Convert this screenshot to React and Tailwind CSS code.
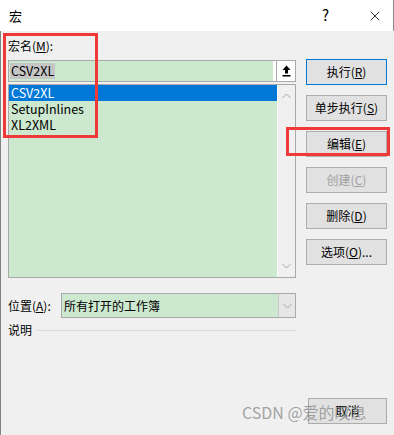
import { X } from 'lucide-react';

const font = { fontFamily: '"Noto Sans CJK SC", "Noto Sans", sans-serif' };

function Btn({ children, primary, disabled }) {
  return (
    <div
      className={`h-[26px] w-full flex items-center justify-center text-[12px] bg-[#e1e1e1] border ${
        primary ? 'border-[#0078d7]' : 'border-[#adadad]'
      } ${disabled ? 'text-[#a0a0a0]' : 'text-black'}`}
    >
      {children}
    </div>
  );
}

function Chevron({ up }) {
  return (
    <svg width="9" height="6" viewBox="0 0 9 6" fill="none" stroke="#a6a6a6" strokeWidth="1">
      {up ? <path d="M0.5 5 L4.5 1 L8.5 5" /> : <path d="M0.5 1 L4.5 5 L8.5 1" />}
    </svg>
  );
}

export default function App() {
  return (
    <div className="relative w-[394px] h-[435px] bg-[#f0f0f0] overflow-hidden" style={font}>
      {/* 标题栏 */}
      <div className="h-[31px] bg-white flex items-center pl-[9px] border-r border-[#8a8a8a]">
        <span className="text-[13px] text-black">宏</span>
        <span className="ml-auto mr-[38px] text-[15px] text-black">?</span>
        <X size={16} strokeWidth={1.2} className="mr-[10px] text-black" />
      </div>

      <div className="flex h-[404px] border-l border-[#7d857f] pl-[7px]">
        {/* 左侧 */}
        <div className="w-[288px] flex flex-col">
          <div className="mt-[7px] h-[16px] leading-[16px] text-[12px] text-black">
            宏名(<span className="underline">M</span>):
          </div>

          <div className="mt-[6px] h-[22px] flex border border-[#a9a9a9] bg-white">
            <div className="flex-1 bg-[#cce8cf] mr-[3px] flex items-center pl-[1px]">
              <span className="bg-[#c6c6c6] text-[12.5px] leading-[16px] px-[1px] text-black">CSV2XL</span>
            </div>
            <div className="w-[19px] border-l border-[#a9a9a9] bg-white flex items-center justify-center">
              <svg width="9" height="12" viewBox="0 0 9 12">
                <path d="M4.5 0.5 L8.5 5 L6 5 L6 8.5 L3 8.5 L3 5 L0.5 5 Z" fill="#000" />
                <rect x="0.5" y="10" width="8" height="1.5" fill="#000" />
              </svg>
            </div>
          </div>

          <div className="mt-[2px] h-[194px] flex border border-[#a9a9a9] bg-white">
            <div className="flex-1 bg-[#cce8cf] text-[12.5px] leading-[16px] text-black mr-[1px]">
              <div className="bg-[#0078d7] text-white pl-[2px] h-[16px]">CSV2XL</div>
              <div className="pl-[2px] h-[16px]">SetupInlines</div>
              <div className="pl-[2px] h-[16px]">XL2XML</div>
            </div>
            <div className="w-[17px] bg-[#f0f0f0] flex flex-col items-center justify-between py-[8px]">
              <Chevron up />
              <Chevron />
            </div>
          </div>

          <div className="mt-[15px] flex items-center h-[25px]">
            <span className="w-[53px] text-[12px] text-black">
              位置(<span className="underline">A</span>):
            </span>
            <div className="flex-1 h-full flex border border-[#a9a9a9]">
              <div className="flex-1 bg-[#cce8cf] flex items-center pl-[2px] text-[12px] text-black">
                所有打开的工作簿
              </div>
              <div className="w-[17px] bg-[#e6e6e6] border-l border-[#c8c8c8] flex items-center justify-center">
                <Chevron />
              </div>
            </div>
          </div>

          <div className="mt-[4px] flex items-center h-[16px]">
            <span className="text-[12px] text-black">说明</span>
            <div className="flex-1 ml-[4px] h-px bg-[#dcdcdc]" />
          </div>
        </div>

        {/* 右侧按钮 */}
        <div className="ml-[10px] w-[81px] flex flex-col pt-[28px] gap-[10px]">
          <Btn primary>执行(<span className="underline">R</span>)</Btn>
          <Btn>单步执行(<span className="underline">S</span>)</Btn>
          <Btn>编辑(<span className="underline">E</span>)</Btn>
          <Btn disabled>创建(<span className="underline">C</span>)</Btn>
          <Btn>删除(<span className="underline">D</span>)</Btn>
          <Btn>选项(<span className="underline">O</span>)...</Btn>
          <div className="mt-auto mb-[11px] ml-[2px] w-[79px]">
            <Btn>取消</Btn>
          </div>
        </div>
      </div>

      {/* 红框标注 */}
      <div className="absolute left-[3px] top-[33px] w-[95px] h-[105px] border-[3px] border-[#f03a3a]" />
      <div className="absolute left-[286px] top-[127px] w-[104px] h-[29px] border-[3px] border-[#f03a3a]" />

      {/* 水印 */}
      <div className="absolute left-[242px] top-[402px] text-[16px] leading-[20px] text-[#8c8c8c]/80 whitespace-nowrap">
        CSDN @爱的叹息
      </div>
    </div>
  );
}
